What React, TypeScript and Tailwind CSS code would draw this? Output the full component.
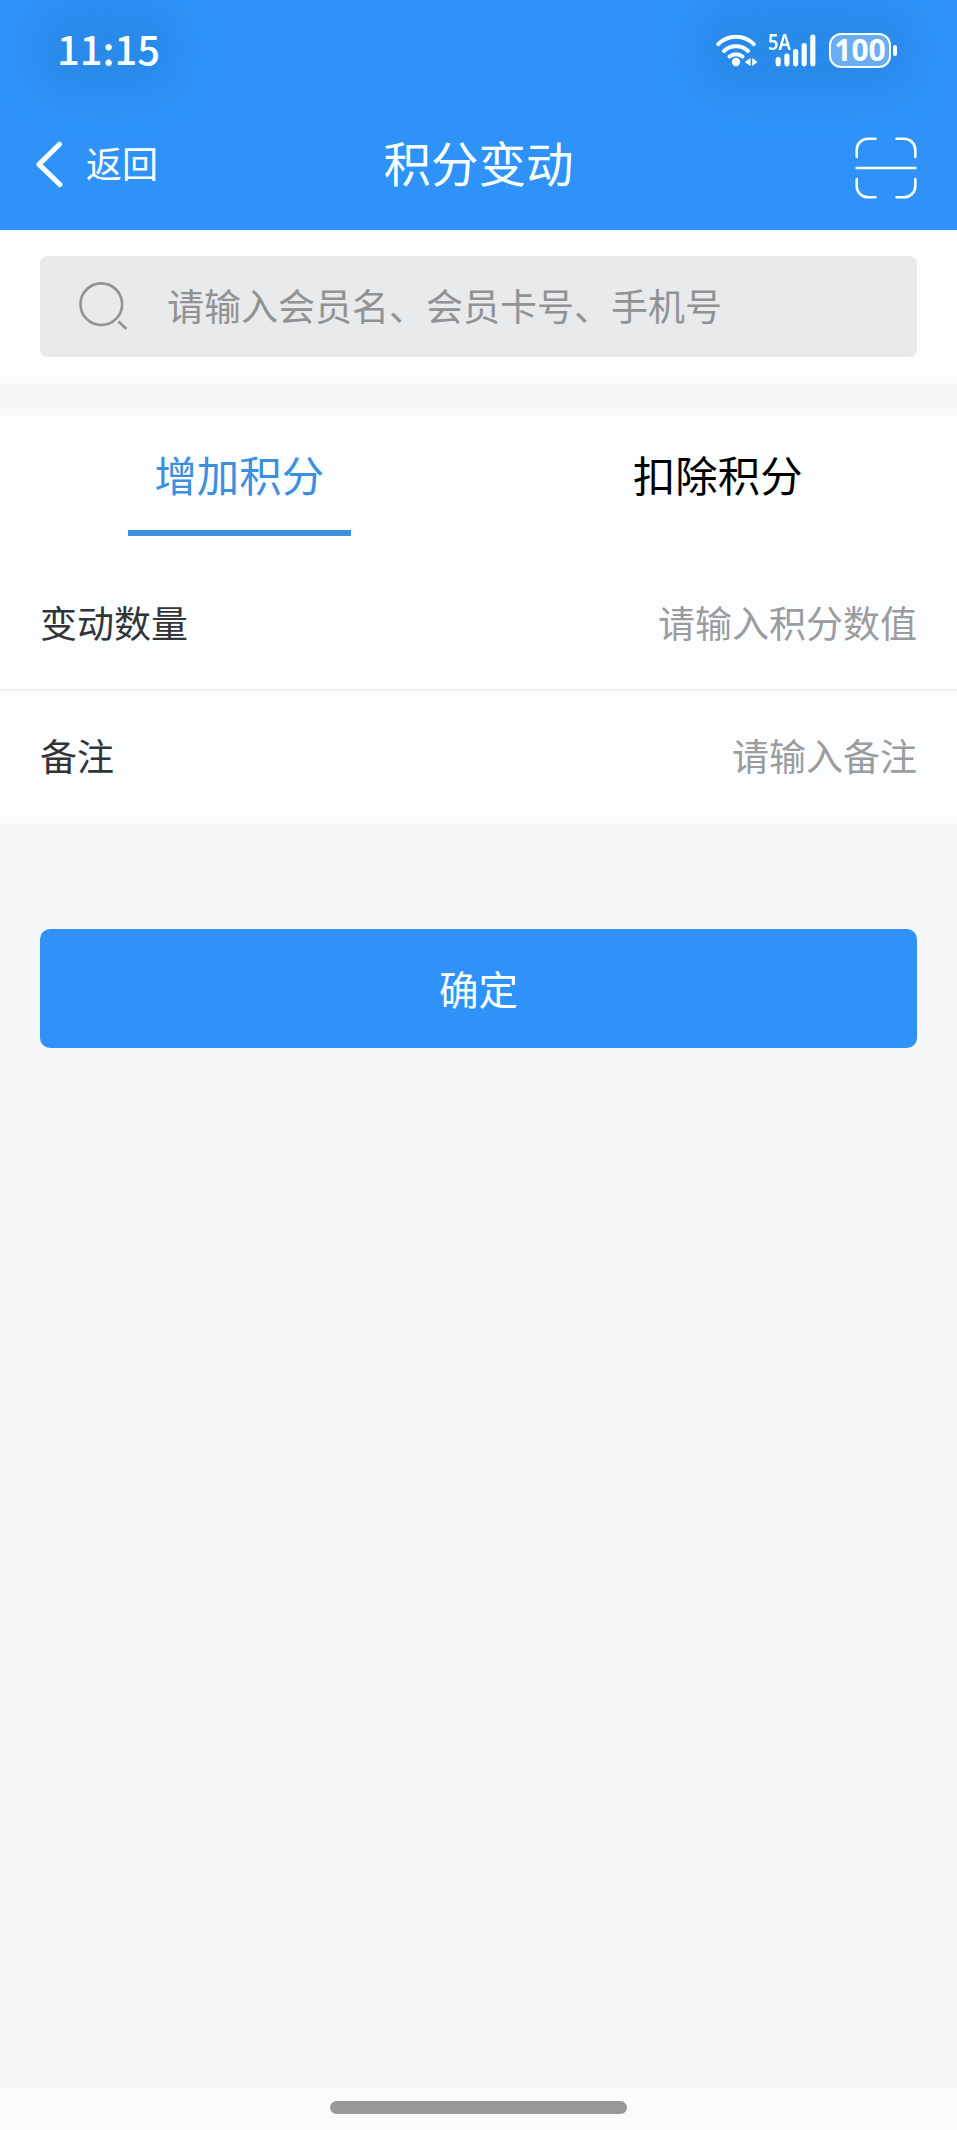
import { useState } from 'react';
import clsx from 'clsx';

const tabs = [
  { key: 'add', label: '增加积分' },
  { key: 'deduct', label: '扣除积分' },
];

const fields = [
  { label: '变动数量', placeholder: '请输入积分数值' },
  { label: '备注', placeholder: '请输入备注' },
];

const WifiIcon = () => (
  <svg width="44" height="34" viewBox="0 0 44 34" fill="none" stroke="currentColor" strokeWidth="4" strokeLinecap="round">
    <path d="M3.2 11.2A25 25 0 0 1 38.8 11.2" />
    <path d="M9 18A17.5 17.5 0 0 1 33 18" />
    <path d="M14.6 23.6A9.8 9.8 0 0 1 27.4 23.6" />
    <circle cx="21" cy="29" r="4.2" fill="currentColor" stroke="none" />
    <path d="M35.6 25v8l-6-4zM37.2 25v8l5.4-4z" fill="currentColor" stroke="none" />
  </svg>
);

const SignalIcon = () => (
  <svg width="42" height="33" viewBox="0 0 42 33" fill="currentColor">
    <rect x="0.6" y="23" width="5.2" height="9.4" rx="2.4" />
    <rect x="9.3" y="19.4" width="5.2" height="13" rx="2.4" />
    <rect x="18" y="15" width="5.2" height="17.4" rx="2.4" />
    <rect x="26.6" y="9" width="5.2" height="23.4" rx="2.4" />
    <rect x="35.2" y="0.6" width="5.2" height="31.8" rx="2.4" />
  </svg>
);

const BackIcon = () => (
  <svg width="28" height="48" viewBox="0 0 28 48" fill="none" stroke="currentColor" strokeWidth="5" strokeLinecap="round" strokeLinejoin="round">
    <path d="M23.5 4.2L3 24.4L24 44.6" />
  </svg>
);

const ScanIcon = () => (
  <svg width="62" height="62" viewBox="0 0 62 62" fill="none" stroke="currentColor" strokeWidth="2.6" strokeLinecap="round">
    <path d="M1.7 20V13A11.3 11.3 0 0 1 13 1.7H20.5" />
    <path d="M41.5 1.7H49A11.3 11.3 0 0 1 60.3 13V20" />
    <path d="M1.7 42V49A11.3 11.3 0 0 0 13 60.3H20.5" />
    <path d="M41.5 60.3H49A11.3 11.3 0 0 0 60.3 49V42" />
    <path d="M1.7 31H60.3" />
  </svg>
);

const SearchIcon = () => (
  <svg width="50" height="50" viewBox="0 0 50 50" fill="none" stroke="currentColor" strokeWidth="2.6">
    <circle cx="22.3" cy="22.2" r="20.8" />
    <path d="M39.4 39.4L47.4 47" />
  </svg>
);

export default function App() {
  const [active, setActive] = useState('add');

  return (
    <div className="flex h-[2130px] w-[957px] flex-col overflow-hidden bg-[#f7f8fa] font-['Noto_Sans_CJK_SC',sans-serif]">
      <header className="relative h-[229.5px] bg-[#2e92f8] text-[#f8ffff]">
        <div className="absolute top-1 left-9 h-[90px] w-[142px] rounded-[40px] bg-[#2a8aea] blur-lg" />
        <div className="absolute top-1 left-[696px] h-[90px] w-[218px] rounded-[40px] bg-[#2a8aea] blur-lg" />

        <div className="relative flex h-[98px] items-center justify-between pr-[60px] pl-[57px]">
          <span className="pb-[2px] text-[40px] leading-none font-medium">11:15</span>
          <div className="flex items-center pt-[2px]">
            <WifiIcon />
            <div className="relative ml-[16px]">
              <span className="absolute top-0 -left-[7px] origin-left scale-x-[0.88] font-['Noto_Sans'] text-[21px] leading-[16px] font-semibold">5A</span>
              <SignalIcon />
            </div>
            <div className="ml-[12px] flex h-[35px] w-[62px] items-center justify-center rounded-[12px] border-[2.6px] border-current bg-white/30">
              <span className="font-['Noto_Sans'] text-[30px] leading-none font-bold">100</span>
            </div>
            <div className="ml-[2px] h-[11px] w-[4px] rounded-full bg-current" />
          </div>
        </div>

        <div className="relative grid h-[131px] grid-cols-3 items-center px-[36px]">
          <button className="flex items-center">
            <BackIcon />
            <span className="ml-[22px] pb-[3px] text-[36px] leading-none">返回</span>
          </button>
          <h1 className="pb-[3px] text-center text-[47.5px] leading-none">积分变动</h1>
          <button className="mt-[9px] mr-[4px] justify-self-end">
            <ScanIcon />
          </button>
        </div>
      </header>

      <section className="h-[153.5px] bg-[#fcfdff] px-10 pt-[26.5px]">
        <div className="flex h-[101px] items-center rounded-[7px] bg-[#e9eaec] pl-[39px] text-[#919294]">
          <SearchIcon />
          <span className="ml-[38px] pb-[2px] text-[37px] leading-none">请输入会员名、会员卡号、手机号</span>
        </div>
      </section>

      <section className="mt-[32px] bg-[#fcfdff]">
        <div className="grid h-[143px] grid-cols-2">
          {tabs.map((tab) => (
            <button
              key={tab.key}
              onClick={() => setActive(tab.key)}
              className={clsx(
                'mx-auto flex h-[121px] w-[223px] items-center justify-center border-b-[6px] pt-[4px] text-[42.4px] leading-none',
                active === tab.key ? 'border-[#3d8edb] text-[#3a8fe0]' : 'border-transparent text-black',
              )}
            >
              {tab.label}
            </button>
          ))}
        </div>

        <div className="divide-y-2 divide-[#efeff1]">
          {fields.map((field) => (
            <div key={field.label} className="flex h-[132.5px] items-center justify-between px-10 pb-[2px] text-[37px] leading-none">
              <span className="text-[#333436]">{field.label}</span>
              <span className="text-[#9b9c9e]">{field.placeholder}</span>
            </div>
          ))}
        </div>
      </section>

      <div className="px-10 pt-[106px]">
        <button className="h-[119px] w-full rounded-[10px] bg-[#2e92f8] pb-[2px] text-[39.5px] leading-none text-[#f8ffff]">确定</button>
      </div>

      <footer className="mt-auto h-[42px] bg-[#fafbfd] pt-[13px]">
        <div className="mx-auto h-[13px] w-[297px] rounded-full bg-[#97989a]" />
      </footer>
    </div>
  );
}
